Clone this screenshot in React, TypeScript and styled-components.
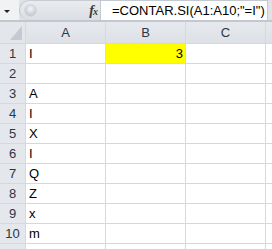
import React from "react";
import styled, { createGlobalStyle } from "styled-components";

const Global = createGlobalStyle`
  html, body { margin: 0; padding: 0; background: #ffffff; overflow: hidden; }
  body { font-family: "Liberation Sans", Arial, sans-serif; }
`;

const Page = styled.div`
  width: 272px;
  height: 249px;
  overflow: hidden;
  display: flex;
  flex-direction: column;
`;

const FormulaBar = styled.div`
  display: flex;
  height: 21px;
  border-bottom: 1px solid #c2c7cd;
  background: #dfe3e8;
`;

const NameBox = styled.div`
  width: 19px;
  background: #f1f2f4;
  display: flex;
  align-items: center;
  padding-left: 4px;
  box-sizing: border-box;
`;

const Arrow = styled.div`
  width: 0;
  height: 0;
  border-left: 3px solid transparent;
  border-right: 3px solid transparent;
  border-top: 3px solid #222;
  margin-top: 2px;
`;

const Pill = styled.div`
  width: 81px;
  box-sizing: border-box;
  display: flex;
  align-items: center;
  justify-content: space-between;
  padding: 0 3px 0 4px;
  border-left: 1px solid #bfc4cb;
  border-top: 1px solid #c9cdd3;
  border-radius: 11px 0 0 11px;
  background: linear-gradient(#e9ecef, #dbdfe4);
`;

const Knob = styled.div`
  width: 11px;
  height: 11px;
  border-radius: 50%;
  background: radial-gradient(circle at 50% 35%, #f4f5f7 0%, #d0d4d9 55%, #b9bec5 100%);
  border: 1px solid #d3d7dc;
`;

const Fx = styled.span`
  font-family: "Liberation Serif", "Times New Roman", serif;
  font-style: italic;
  font-weight: bold;
  font-size: 14px;
  color: #3a3a3a;
  letter-spacing: -1px;
  small { font-size: 10px; }
`;

const FormulaInput = styled.div`
  width: 168px;
  box-sizing: border-box;
  background: #ffffff;
  border: 1px solid #c3c9d0;
  border-bottom: none;
  font-size: 13px;
  line-height: 19px;
  padding-left: 11px;
  color: #000;
  white-space: nowrap;
`;

const Gap = styled.div`
  height: 3px;
  background: #ffffff;
  border-bottom: 1px solid #c5c9cf;
  box-sizing: border-box;
  display: flex;
`;

const Sheet = styled.div`
  display: grid;
  grid-template-columns: 25px 79px 79px 79px 79px;
  grid-template-rows: 21px repeat(11, 19px);
  gap: 1px;
  background: #d6d8db;
`;

const Corner = styled.div`
  background: #e3e6ea;
  display: flex;
  justify-content: flex-end;
  align-items: flex-end;
  padding: 0 3px 3px 0;
`;

const Triangle = styled.div`
  width: 0;
  height: 0;
  border-left: 12px solid transparent;
  border-bottom: 14px solid #c6cad0;
`;

const ColHead = styled.div`
  background: linear-gradient(#e6e9ed, #dde1e6);
  font-size: 13px;
  line-height: 21px;
  text-align: center;
  color: #2b3646;
`;

const RowHead = styled.div`
  background: #e4e7eb;
  font-size: 13px;
  line-height: 19px;
  text-align: center;
  color: #2b3646;
`;

const Cell = styled.div<{ $fill?: string; $right?: boolean }>`
  background: ${(p) => p.$fill || "#ffffff"};
  font-size: 13px;
  line-height: 18px;
  padding: 1px 2px 0 3px;
  text-align: ${(p) => (p.$right ? "right" : "left")};
  color: #000;
  overflow: hidden;
  white-space: nowrap;
`;

const colA = ["I", "", "A", "I", "X", "I", "Q", "Z", "x", "m", ""];

export default function App() {
  return (
    <Page>
      <Global />
      <FormulaBar>
        <NameBox>
          <Arrow />
        </NameBox>
        <Pill>
          <Knob />
          <Fx>
            f<small>x</small>
          </Fx>
        </Pill>
        <FormulaInput>=CONTAR.SI(A1:A10;"=I")</FormulaInput>
      </FormulaBar>
      <Gap />
      <Sheet>
        <Corner>
          <Triangle />
        </Corner>
        <ColHead>A</ColHead>
        <ColHead>B</ColHead>
        <ColHead>C</ColHead>
        <ColHead />
        {colA.map((v, i) => (
          <React.Fragment key={i}>
            <RowHead>{i < 10 ? i + 1 : ""}</RowHead>
            <Cell>{v}</Cell>
            {i === 0 ? (
              <Cell $fill="#ffff00" $right>
                3
              </Cell>
            ) : (
              <Cell />
            )}
            <Cell />
            <Cell />
          </React.Fragment>
        ))}
      </Sheet>
    </Page>
  );
}
